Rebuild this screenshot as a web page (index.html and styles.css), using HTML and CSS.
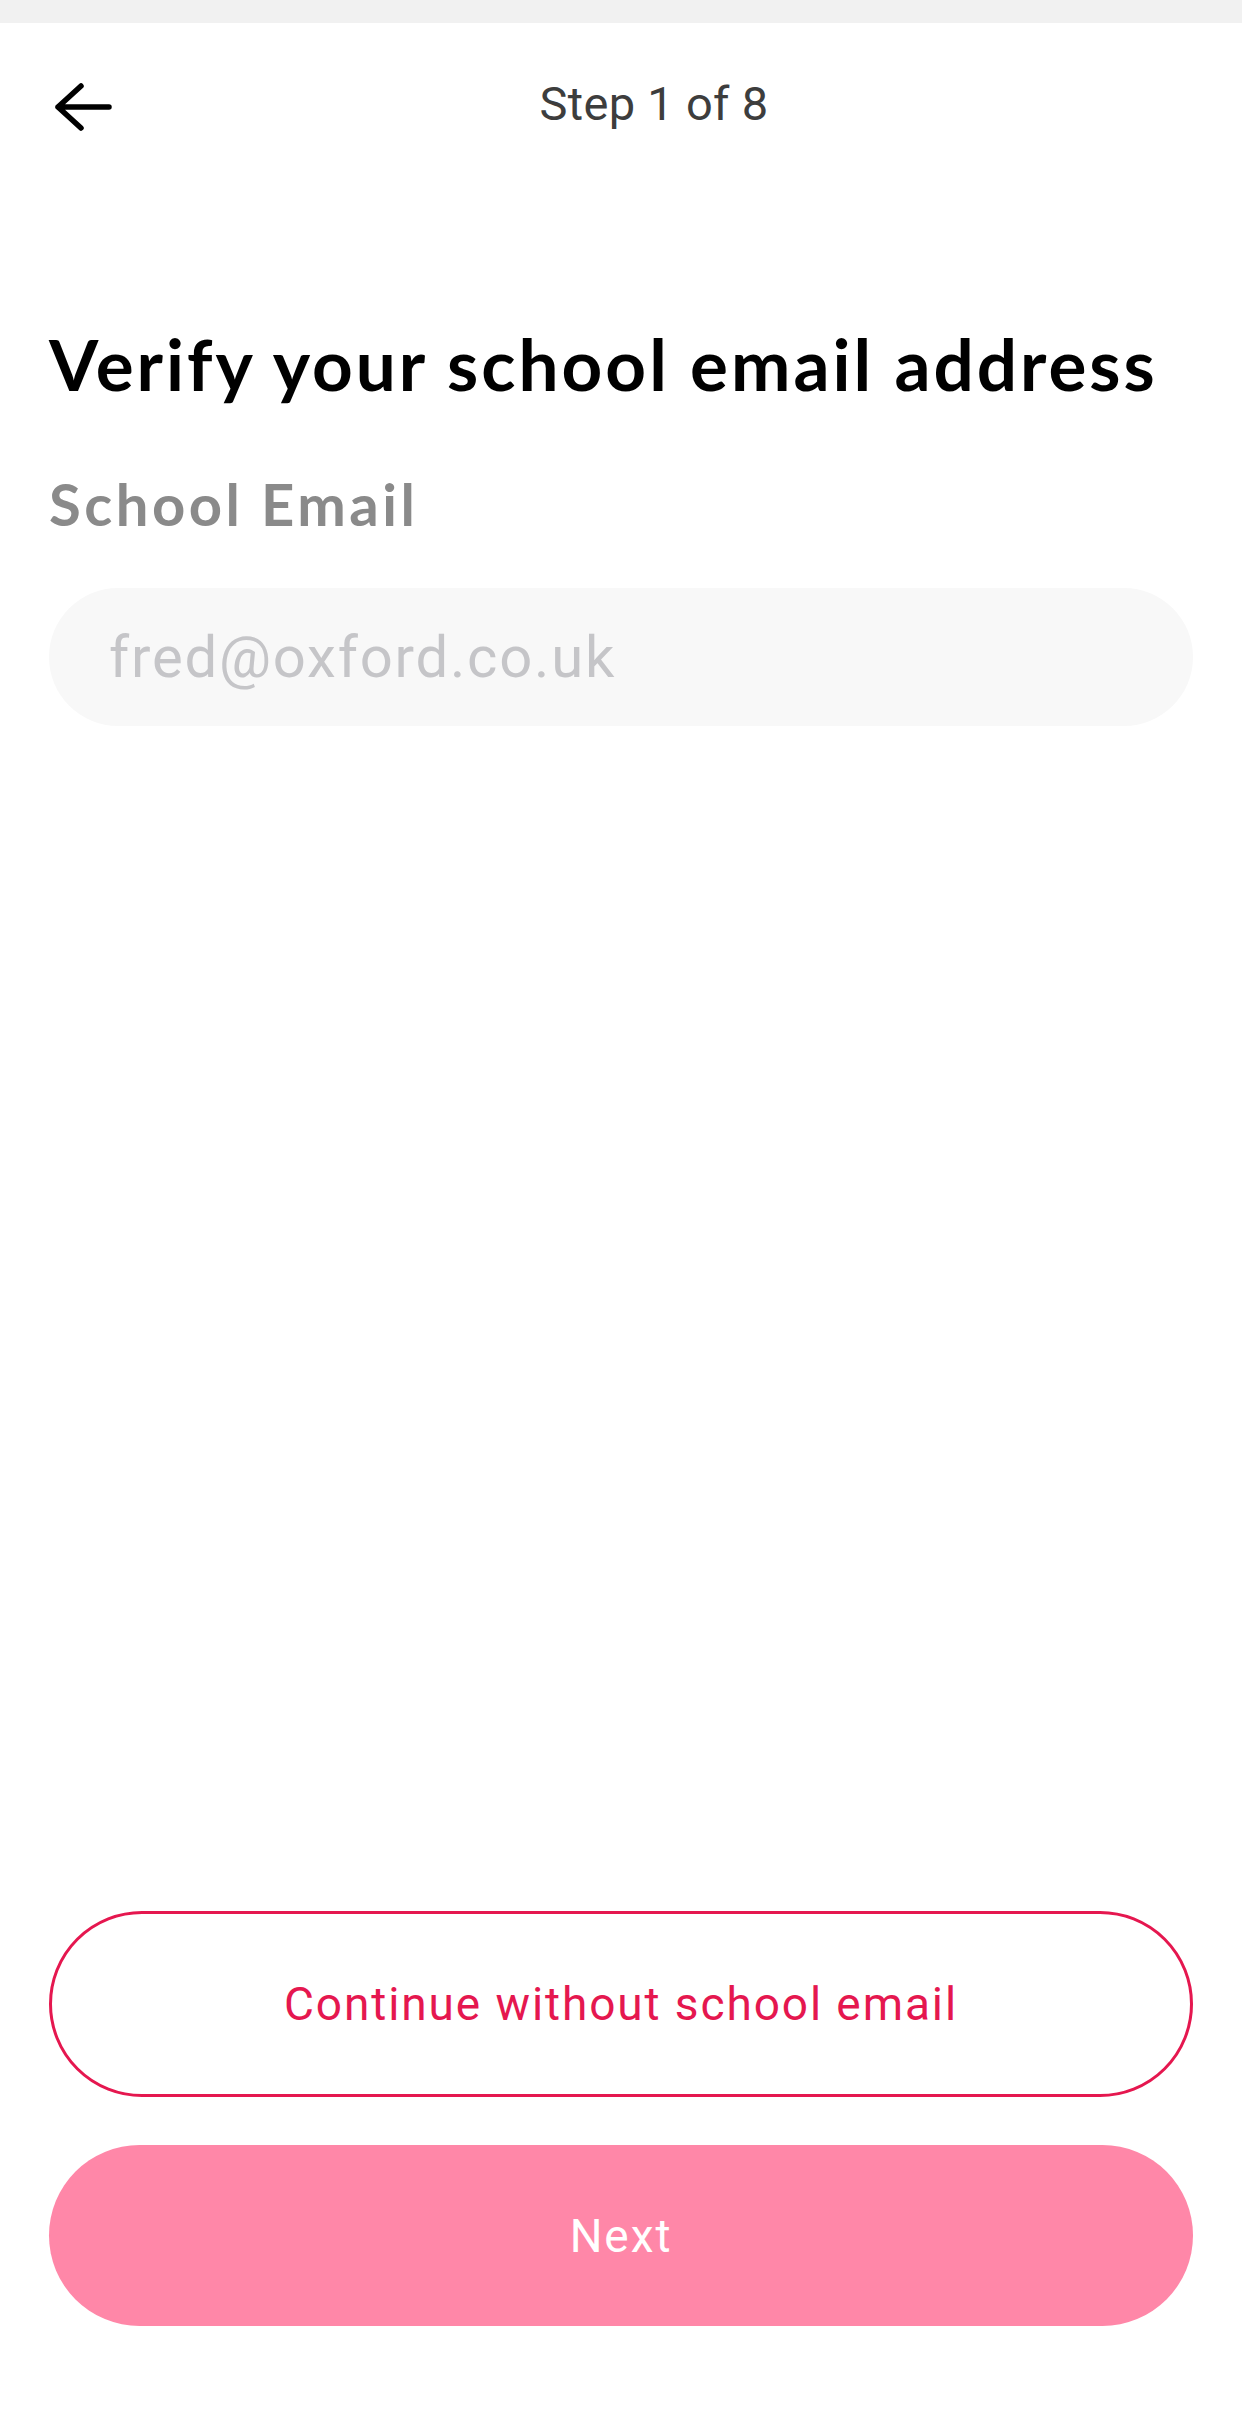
FILE: index.html
```html
<!DOCTYPE html>
<html lang="en">
<head>
<meta charset="utf-8">
<title>Verify your school email address</title>
<link rel="stylesheet" href="styles.css">
</head>
<body>
<div class="screen">
  <div class="statusbar"></div>
  <header class="topbar">
    <button class="back" aria-label="Back">
      <svg width="66" height="64" viewBox="0 0 66 64" fill="none" stroke="#000" stroke-width="5.5" stroke-linecap="round" stroke-linejoin="round">
        <path d="M32 11 L9 32 L32 53 M9 32 H60"/>
      </svg>
    </button>
    <div class="step">Step 1 of 8</div>
  </header>
  <main class="content">
    <h1 class="title">Verify your school email address</h1>
    <label class="label" for="email">School Email</label>
    <div class="input"><span class="placeholder">fred@oxford.co.uk</span></div>
  </main>
  <footer class="actions">
    <button class="btn btn-outline">Continue without school email</button>
    <button class="btn btn-primary">Next</button>
  </footer>
</div>
</body>
</html>
```

FILE: styles.css
```css
html, body {
  margin: 0;
  padding: 0;
  background: #ffffff;
}

.screen {
  width: 1242px;
  height: 2425px;
  display: flex;
  flex-direction: column;
  font-family: Roboto, "Liberation Sans", sans-serif;
}

.statusbar {
  height: 23px;
  background: #f1f1f1;
}

.topbar {
  height: 168px;
  display: flex;
  align-items: center;
  padding: 0 49px;
}

.back {
  width: 66px;
  height: 64px;
  padding: 0;
  margin: 0;
  border: 0;
  background: none;
  display: flex;
}

.step {
  flex: 1;
  text-align: center;
  font-size: 47px;
  line-height: 1;
  color: #3d3d3d;
  margin-top: -8px;
  letter-spacing: 0.3px;
}

.content {
  display: flex;
  flex-direction: column;
  padding: 0 49px;
}

.title {
  margin: 137px 0 0;
  font-family: Lato, "Liberation Sans", sans-serif;
  font-weight: 700;
  font-size: 71px;
  line-height: 1;
  letter-spacing: 3px;
  color: #000;
  white-space: nowrap;
}

.label {
  margin-top: 76px;
  font-family: Lato, "Liberation Sans", sans-serif;
  font-weight: 700;
  font-size: 58px;
  line-height: 1;
  letter-spacing: 3.5px;
  color: #8a8a8a;
}

.input {
  margin-top: 55px;
  height: 138px;
  border-radius: 69px;
  background: #f8f8f8;
  display: flex;
  align-items: center;
  padding-left: 60px;
}

.placeholder {
  font-size: 58px;
  line-height: 1;
  letter-spacing: 1.8px;
  color: #c5c5c8;
}

.actions {
  margin-top: auto;
  padding: 0 49px 99px;
  display: flex;
  flex-direction: column;
  gap: 48px;
}

.btn {
  width: 100%;
  border-radius: 93px;
  font-family: Roboto, "Liberation Sans", sans-serif;
  font-size: 46px;
  letter-spacing: 1.9px;
  padding: 0;
  margin: 0;
}

.btn-outline {
  height: 186px;
  background: #fff;
  border: 3px solid #e5174f;
  color: #e5174f;
}

.btn-primary {
  height: 181px;
  background: #ff87a8;
  border: 0;
  color: #fff;
}
```
